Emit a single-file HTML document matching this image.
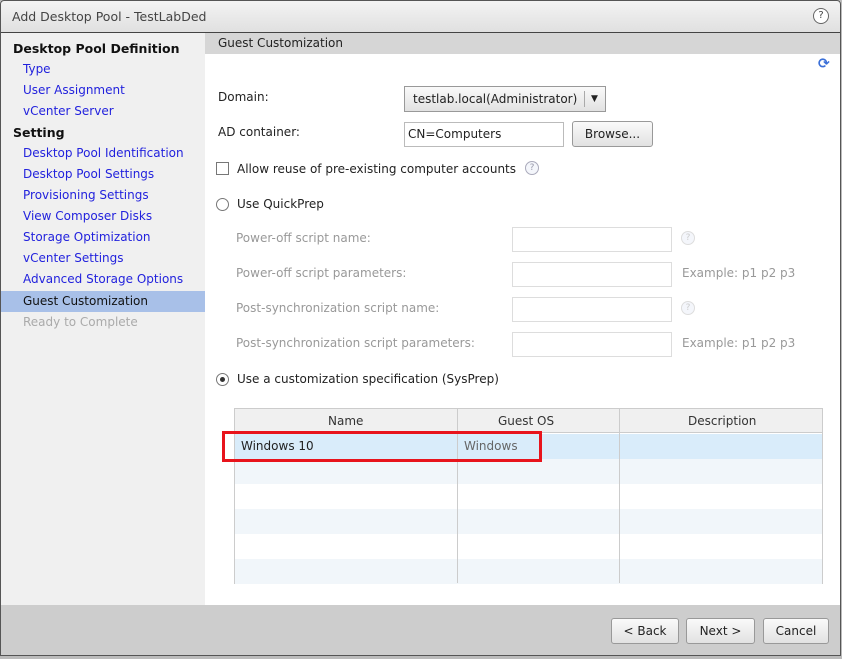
<!DOCTYPE html><html><head><style>
*{margin:0;padding:0;box-sizing:border-box}
body{width:842px;height:659px;overflow:hidden;background:#bbb;font-family:"DejaVu Sans","Liberation Sans",sans-serif;font-size:12px;color:#222;position:relative}
.a{position:absolute;white-space:nowrap}
.dlg{position:absolute;left:0;top:0;width:841px;height:656px;border-radius:4px 4px 0 0;background:#fff;overflow:hidden}
.frame{position:absolute;left:0;top:0;width:841px;height:656px;border:1px solid #555;border-radius:4px 4px 0 0;pointer-events:none}
.title{position:absolute;left:0;top:0;width:100%;height:33px;background:linear-gradient(#f4f4f4,#e0e0e0);border-bottom:1px solid #444}
.left{position:absolute;left:0;top:33px;width:205px;height:572px;background:#f0f0f0}
.nav{position:absolute;left:23px;color:#2222dd}
.h{position:absolute;left:13px;font-weight:bold;font-size:12.5px;color:#111}
.gray{color:#999}
.inp{position:absolute;border:1px solid #bbb;background:#fff;height:25px}
.btn{position:absolute;border:1px solid #999;border-radius:3px;background:linear-gradient(#fafafa,#e2e2e2);text-align:center;line-height:24px;height:26px}
.q{position:absolute;width:14px;height:14px;border-radius:50%;border:1px solid #aab;color:#99a;font-size:9px;text-align:center;line-height:12px;background:#f4f6fb}
.radio{position:absolute;width:13px;height:13px;border-radius:50%;border:1px solid #777;background:#fff}
</style></head><body>
<div class="dlg">
<div class="title"><div class="a" style="left:12px;top:9px;color:#444;font-size:12.5px">Add Desktop Pool - TestLabDed</div>
<div class="a" style="right:12px;top:8px;width:16px;height:16px;border:1px solid #666;border-radius:50%;font-size:10px;text-align:center;line-height:14px;color:#444;background:#fff">?</div></div>
<div class="left">
<div class="h" style="top:8px">Desktop Pool Definition</div>
<div class="nav" style="top:29px">Type</div>
<div class="nav" style="top:50px">User Assignment</div>
<div class="nav" style="top:71px">vCenter Server</div>
<div class="h" style="top:92px">Setting</div>
<div class="nav" style="top:113px">Desktop Pool Identification</div>
<div class="nav" style="top:134px">Desktop Pool Settings</div>
<div class="nav" style="top:155px">Provisioning Settings</div>
<div class="nav" style="top:176px">View Composer Disks</div>
<div class="nav" style="top:197px">Storage Optimization</div>
<div class="nav" style="top:218px">vCenter Settings</div>
<div class="nav" style="top:239px">Advanced Storage Options</div>
<div class="a" style="left:0;top:258px;width:205px;height:21px;background:#a8c0e8"></div>
<div class="a" style="left:23px;top:261px;color:#111">Guest Customization</div>
<div class="a gray" style="left:23px;top:282px;color:#aaa">Ready to Complete</div>
</div>
<div class="a" style="left:205px;top:33px;width:636px;height:21px;background:#d6d6d6"></div>
<div class="a" style="left:218px;top:36px;color:#222">Guest Customization</div>
<div class="a" style="left:818px;top:56px;color:#3a6fd8;font-size:14px;font-weight:bold">⟳</div>
<div class="a" style="left:218px;top:90px">Domain:</div>
<div class="btn" style="left:404px;top:86px;width:202px;border-radius:0;text-align:left;padding-left:8px">testlab.local(Administrator)<span class="a" style="left:179px;top:4px;height:16px;border-left:1px solid #aaa"></span><span class="a" style="left:186px;top:0;font-size:9px">▼</span></div>
<div class="a" style="left:218px;top:125px">AD container:</div>
<div class="inp" style="left:404px;top:122px;width:160px;padding:4px 3px">CN=Computers</div>
<div class="btn" style="left:572px;top:121px;width:81px">Browse...</div>
<div class="a" style="left:216px;top:162px;width:13px;height:13px;border:1px solid #777;background:#fff"></div>
<div class="a" style="left:237px;top:162px">Allow reuse of pre-existing computer accounts</div>
<div class="q" style="left:525px;top:161px">?</div>
<div class="radio" style="left:216px;top:198px"></div>
<div class="a" style="left:237px;top:197px">Use QuickPrep</div>
<div class="a gray" style="left:236px;top:231px">Power-off script name:</div>
<div class="inp" style="left:512px;top:227px;width:160px;border-color:#ddd"></div>
<div class="q" style="left:681px;top:231px;border-color:#ddd;color:#ccc">?</div>
<div class="a gray" style="left:236px;top:266px">Power-off script parameters:</div>
<div class="inp" style="left:512px;top:262px;width:160px;border-color:#ddd"></div>
<div class="a gray" style="left:682px;top:266px">Example: p1 p2 p3</div>
<div class="a gray" style="left:236px;top:301px">Post-synchronization script name:</div>
<div class="inp" style="left:512px;top:297px;width:160px;border-color:#ddd"></div>
<div class="q" style="left:681px;top:301px;border-color:#ddd;color:#ccc">?</div>
<div class="a gray" style="left:236px;top:336px">Post-synchronization script parameters:</div>
<div class="inp" style="left:512px;top:332px;width:160px;border-color:#ddd"></div>
<div class="a gray" style="left:682px;top:336px">Example: p1 p2 p3</div>
<div class="radio" style="left:216px;top:373px"><div class="a" style="left:3px;top:3px;width:5px;height:5px;border-radius:50%;background:#333"></div></div>
<div class="a" style="left:237px;top:372px">Use a customization specification (SysPrep)</div>
<div class="a" style="left:234px;top:408px;width:589px;height:176px;border:1px solid #ccc;background:#fff">
<div class="a" style="left:0;top:0;width:587px;height:24px;background:#f0f0f0;border-bottom:1px solid #ccc"></div>
<div class="a" style="left:0;top:25px;width:587px;height:25px;background:#d9ecfa"></div>
<div class="a" style="left:0;top:50px;width:587px;height:25px;background:#f1f6fa"></div>
<div class="a" style="left:0;top:100px;width:587px;height:25px;background:#f1f6fa"></div>
<div class="a" style="left:0;top:150px;width:587px;height:25px;background:#f1f6fa"></div>
<div class="a" style="left:222px;top:0;height:174px;border-left:1px solid #ccc"></div>
<div class="a" style="left:384px;top:0;height:174px;border-left:1px solid #ccc"></div>
<div class="a" style="left:93px;top:5px;color:#333">Name</div>
<div class="a" style="left:263px;top:5px;color:#333">Guest OS</div>
<div class="a" style="left:453px;top:5px;color:#333">Description</div>
<div class="a" style="left:6px;top:30px;color:#222">Windows 10</div>
<div class="a" style="left:229px;top:30px;color:#666">Windows</div>
</div>
<div class="a" style="left:222px;top:431px;width:320px;height:31px;border:3px solid #e8141c"></div>
<div class="a" style="left:0;top:605px;width:841px;height:51px;background:#cdcdcd"></div>
<div class="btn" style="left:611px;top:618px;width:68px">&lt; Back</div>
<div class="btn" style="left:686px;top:618px;width:69px">Next &gt;</div>
<div class="btn" style="left:763px;top:618px;width:66px">Cancel</div>
</div>
<div class="frame"></div>
</body></html>
